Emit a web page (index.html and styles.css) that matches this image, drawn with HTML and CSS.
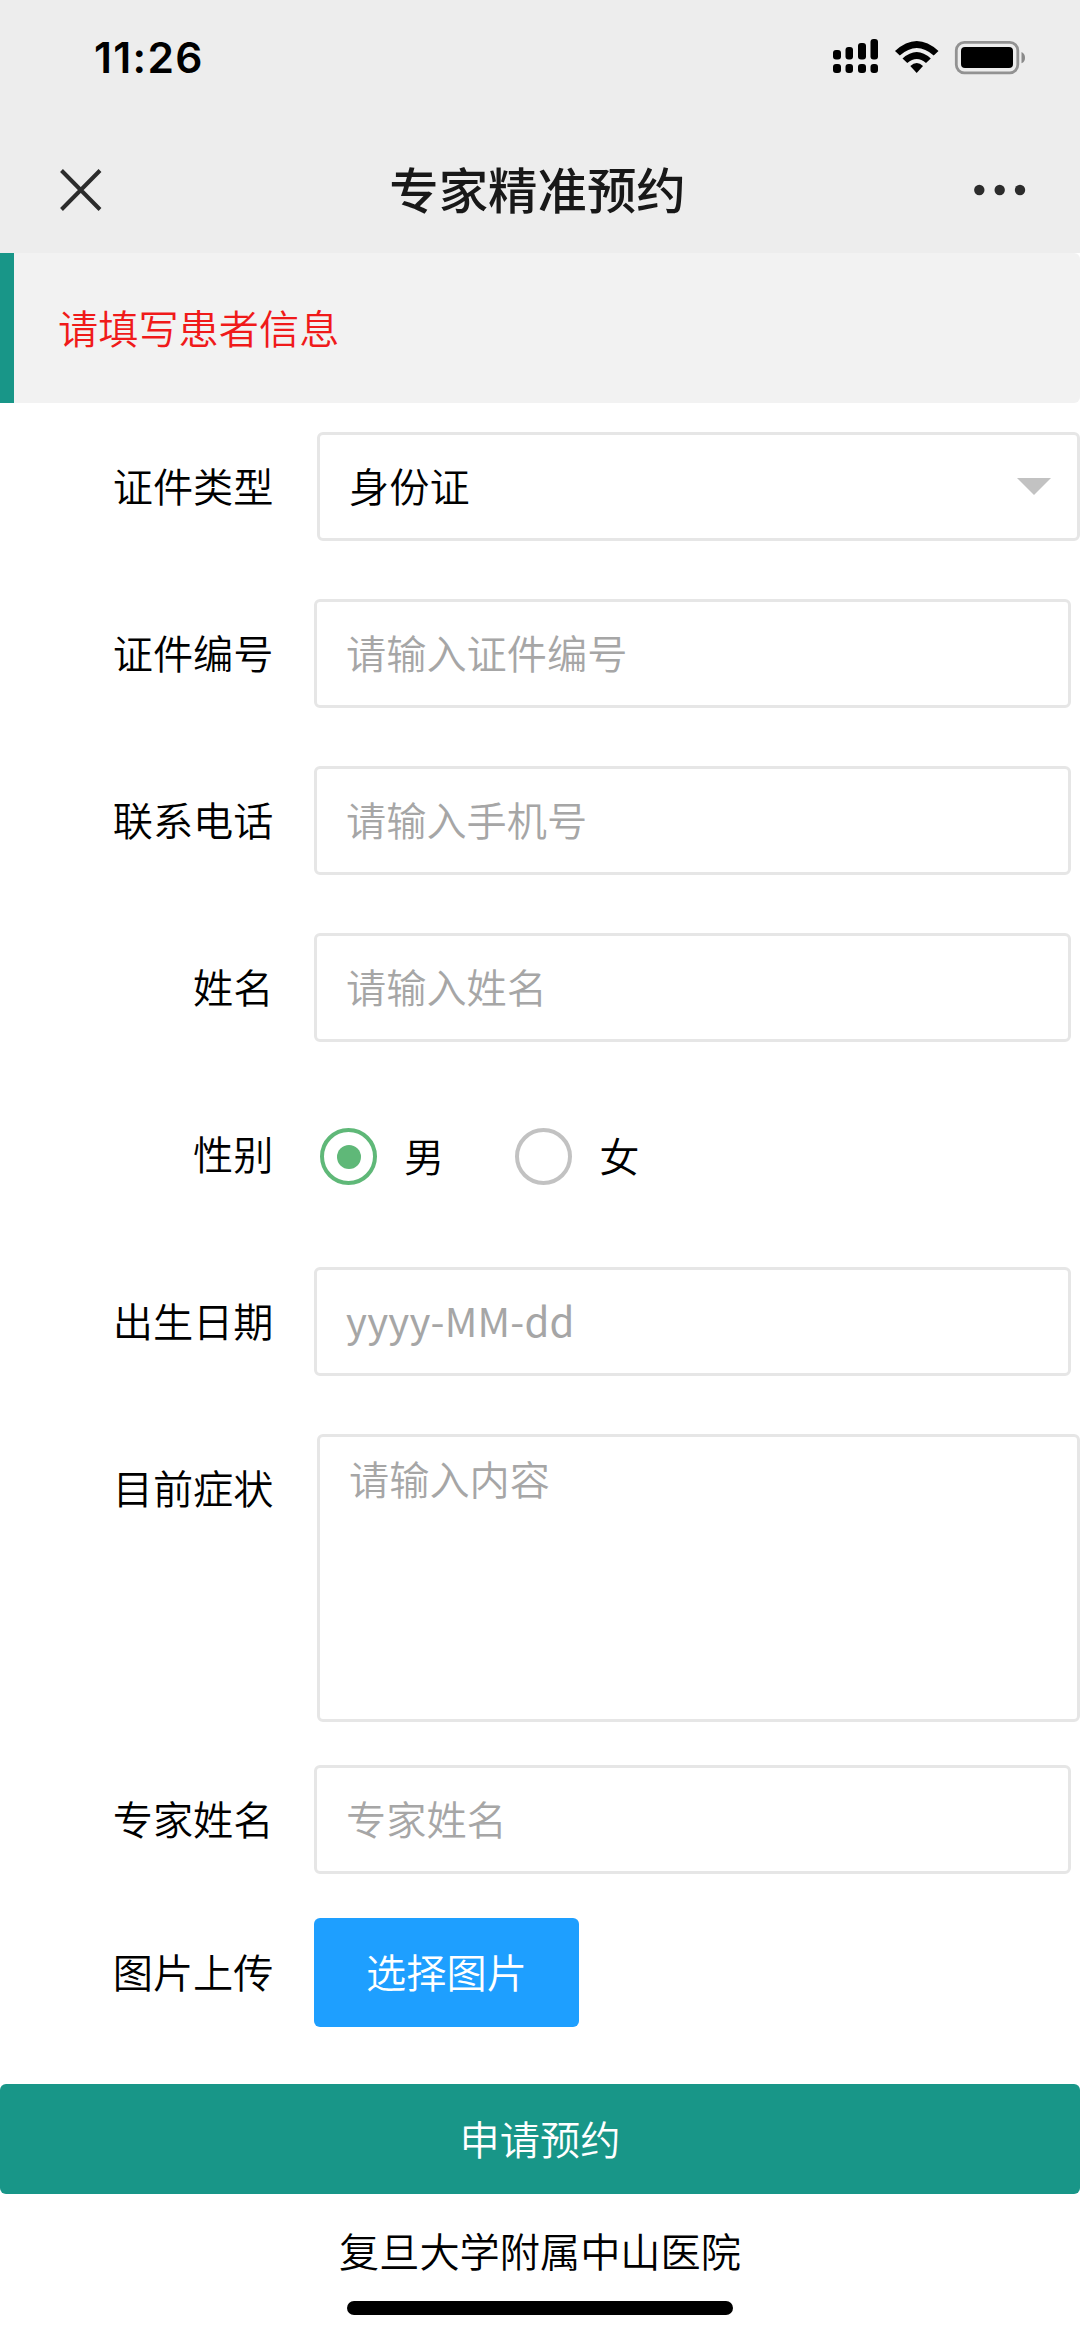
FILE: index.html
```html
<!DOCTYPE html>
<html lang="zh-CN">
<head>
<meta charset="utf-8">
<title>专家精准预约</title>
<link rel="stylesheet" href="styles.css">
</head>
<body>
<header class="top">
  <div class="status">
    <span class="time">11:26</span>
    <svg class="status-icons" width="194" height="40" viewBox="0 0 194 40">
      <g>
        <rect x="1" y="13" width="8" height="9.500" rx="3"/>
        <rect x="13.500" y="10" width="7.500" height="12.500" rx="3"/>
        <rect x="26" y="6" width="8" height="16.500" rx="3"/>
        <rect x="38.500" y="2" width="7.500" height="20.500" rx="3"/>
        <rect x="1" y="27" width="8" height="9" rx="3"/>
        <rect x="13.500" y="27" width="7.500" height="9" rx="3"/>
        <rect x="26" y="27" width="8" height="9" rx="3"/>
        <rect x="38.500" y="27" width="7.500" height="9" rx="3"/>
      </g>
      <path d="M63 14Q84.800-6 106.500 14L101.700 18.500Q84.800 3.500 67.800 18.500Z"/>
      <path d="M70.500 21.500Q84.800 8.500 98.800 21.500L94 26Q84.800 18 75.300 26Z"/>
      <path d="M78.300 29Q84.800 23 91 29L84.700 36Z"/>
      <rect x="124.300" y="5.300" width="61.500" height="30.500" rx="8" fill="none" stroke="#929292" stroke-width="2.800"/>
      <rect x="129" y="10" width="52" height="21" rx="4"/>
      <path d="M189.500 15Q193 16.500 193 20.700T189.500 26.300Z" fill="#8a8a8a"/>
    </svg>
  </div>
  <nav class="navbar">
    <svg class="close" width="42" height="42" viewBox="0 0 42 42"><path d="M1.500 1.500L40 40.500M40 1.500L1.500 40.500" stroke="#2c2c2c" stroke-width="4"/></svg>
    <h1>专家精准预约</h1>
    <svg class="more" width="52" height="12" viewBox="0 0 52 12" fill="#2c2c2c"><circle cx="5.300" cy="6" r="5.200"/><circle cx="25.700" cy="6" r="5.200"/><circle cx="46" cy="6" r="5.200"/></svg>
  </nav>
</header>
<main>
  <p class="notice">请填写患者信息</p>
  <form class="form">
    <div class="row wide">
      <label>证件类型</label>
      <div class="select"><span>身份证</span><i class="caret"></i></div>
    </div>
    <div class="row"><label>证件编号</label><input type="text" placeholder="请输入证件编号"></div>
    <div class="row"><label>联系电话</label><input type="text" placeholder="请输入手机号"></div>
    <div class="row"><label>姓名</label><input type="text" placeholder="请输入姓名"></div>
    <div class="row">
      <label>性别</label>
      <div class="radios">
        <span class="radio checked"><i class="ring"></i><span>男</span></span>
        <span class="radio"><i class="ring"></i><span>女</span></span>
      </div>
    </div>
    <div class="row"><label>出生日期</label><input class="date" type="text" placeholder="yyyy-MM-dd"></div>
    <div class="row wide symptoms"><label>目前症状</label><textarea placeholder="请输入内容"></textarea></div>
    <div class="row expert"><label>专家姓名</label><input type="text" placeholder="专家姓名"></div>
    <div class="row upload"><label>图片上传</label><button type="button" class="pick">选择图片</button></div>
    <button type="button" class="submit">申请预约</button>
  </form>
</main>
<footer>
  <p>复旦大学附属中山医院</p>
  <div class="home"></div>
</footer>
</body>
</html>
```
FILE: styles.css
```css
* { box-sizing: border-box; margin: 0; padding: 0; }

body {
  width: 1080px;
  height: 2338px;
  overflow: hidden;
  background: #fff;
  color: #000;
  font: 350 40.2px/58px "Noto Sans CJK SC", sans-serif;
}

input, textarea, button { font: inherit; color: inherit; outline: 0; }

.top { height: 253px; background: #ededed; }

.status {
  display: flex;
  justify-content: space-between;
  height: 127px;
  padding: 37px 54px 0 94px;
}

.time {
  font: 600 42.5px/42px Inter, sans-serif;
  letter-spacing: 1.3px;
}

.navbar {
  display: flex;
  align-items: center;
  justify-content: space-between;
  height: 126px;
  padding: 0 54px 0 60px;
}

h1 {
  margin-left: -1px;
  padding-bottom: 4px;
  color: #181818;
  font-size: 49.4px;
  font-weight: 500;
  line-height: 72px;
}

.notice {
  height: 150px;
  padding-left: 44px;
  border-left: 14.4px solid #189688;
  border-radius: 0 6px 6px 0;
  background: #f2f2f2;
  color: #f01a1a;
  line-height: 147px;
}

.form { padding-top: 29px; }

.row {
  display: grid;
  grid-template-columns: 273.5px 1fr;
  column-gap: 40.5px;
  height: 109px;
  margin-bottom: 58px;
  padding-right: 9px;
}

.row.wide { column-gap: 43.5px; padding-right: 0; }

label { text-align: right; line-height: 106px; }

.row input, .select, textarea {
  width: 100%;
  height: 109px;
  padding: 0 29px 5px;
  border: 3px solid #e6e6e6;
  border-radius: 6px;
  background: #fff;
}

::placeholder { color: #a6a6a6; opacity: 1; }

.row .date { font-weight: 400; letter-spacing: .2px; }

.select {
  display: flex;
  align-items: center;
  justify-content: space-between;
  padding: 0 26px 0 29px;
}

.select span, .radio span { padding-bottom: 3px; }

.caret {
  width: 34px;
  height: 17px;
  background: #c2c2c2;
  clip-path: polygon(0 0, 100% 0, 50% 100%);
}

.radios { display: flex; align-items: center; gap: 71px; padding: 4px 0 0 6px; }

.radio { display: flex; align-items: center; gap: 27px; }

.ring {
  display: grid;
  place-items: center;
  width: 57px;
  height: 57px;
  border: 4px solid #c2c2c2;
  border-radius: 50%;
}

.checked .ring { border-color: #5fb878; }

.checked .ring::before {
  content: "";
  width: 24px;
  height: 24px;
  border-radius: 50%;
  background: #5fb878;
}

.row.symptoms { height: 288px; margin-bottom: 43px; }

.row textarea { height: 288px; padding-top: 12px; resize: none; }

.row.expert { margin-bottom: 44px; }

.row.upload { margin-bottom: 57px; }

button { border: 0; border-radius: 6px; color: #fff; }

.row .pick { width: 265px; height: 109px; padding-bottom: 3px; background: #1e9fff; }

.submit {
  display: block;
  width: 100%;
  height: 110px;
  padding-bottom: 3px;
  background: #189688;
}

footer {
  display: flex;
  flex-direction: column;
  align-items: center;
  padding-top: 27px;
}

.home {
  width: 386px;
  height: 14px;
  margin-top: 22px;
  border-radius: 7px;
  background: #000;
}
```
